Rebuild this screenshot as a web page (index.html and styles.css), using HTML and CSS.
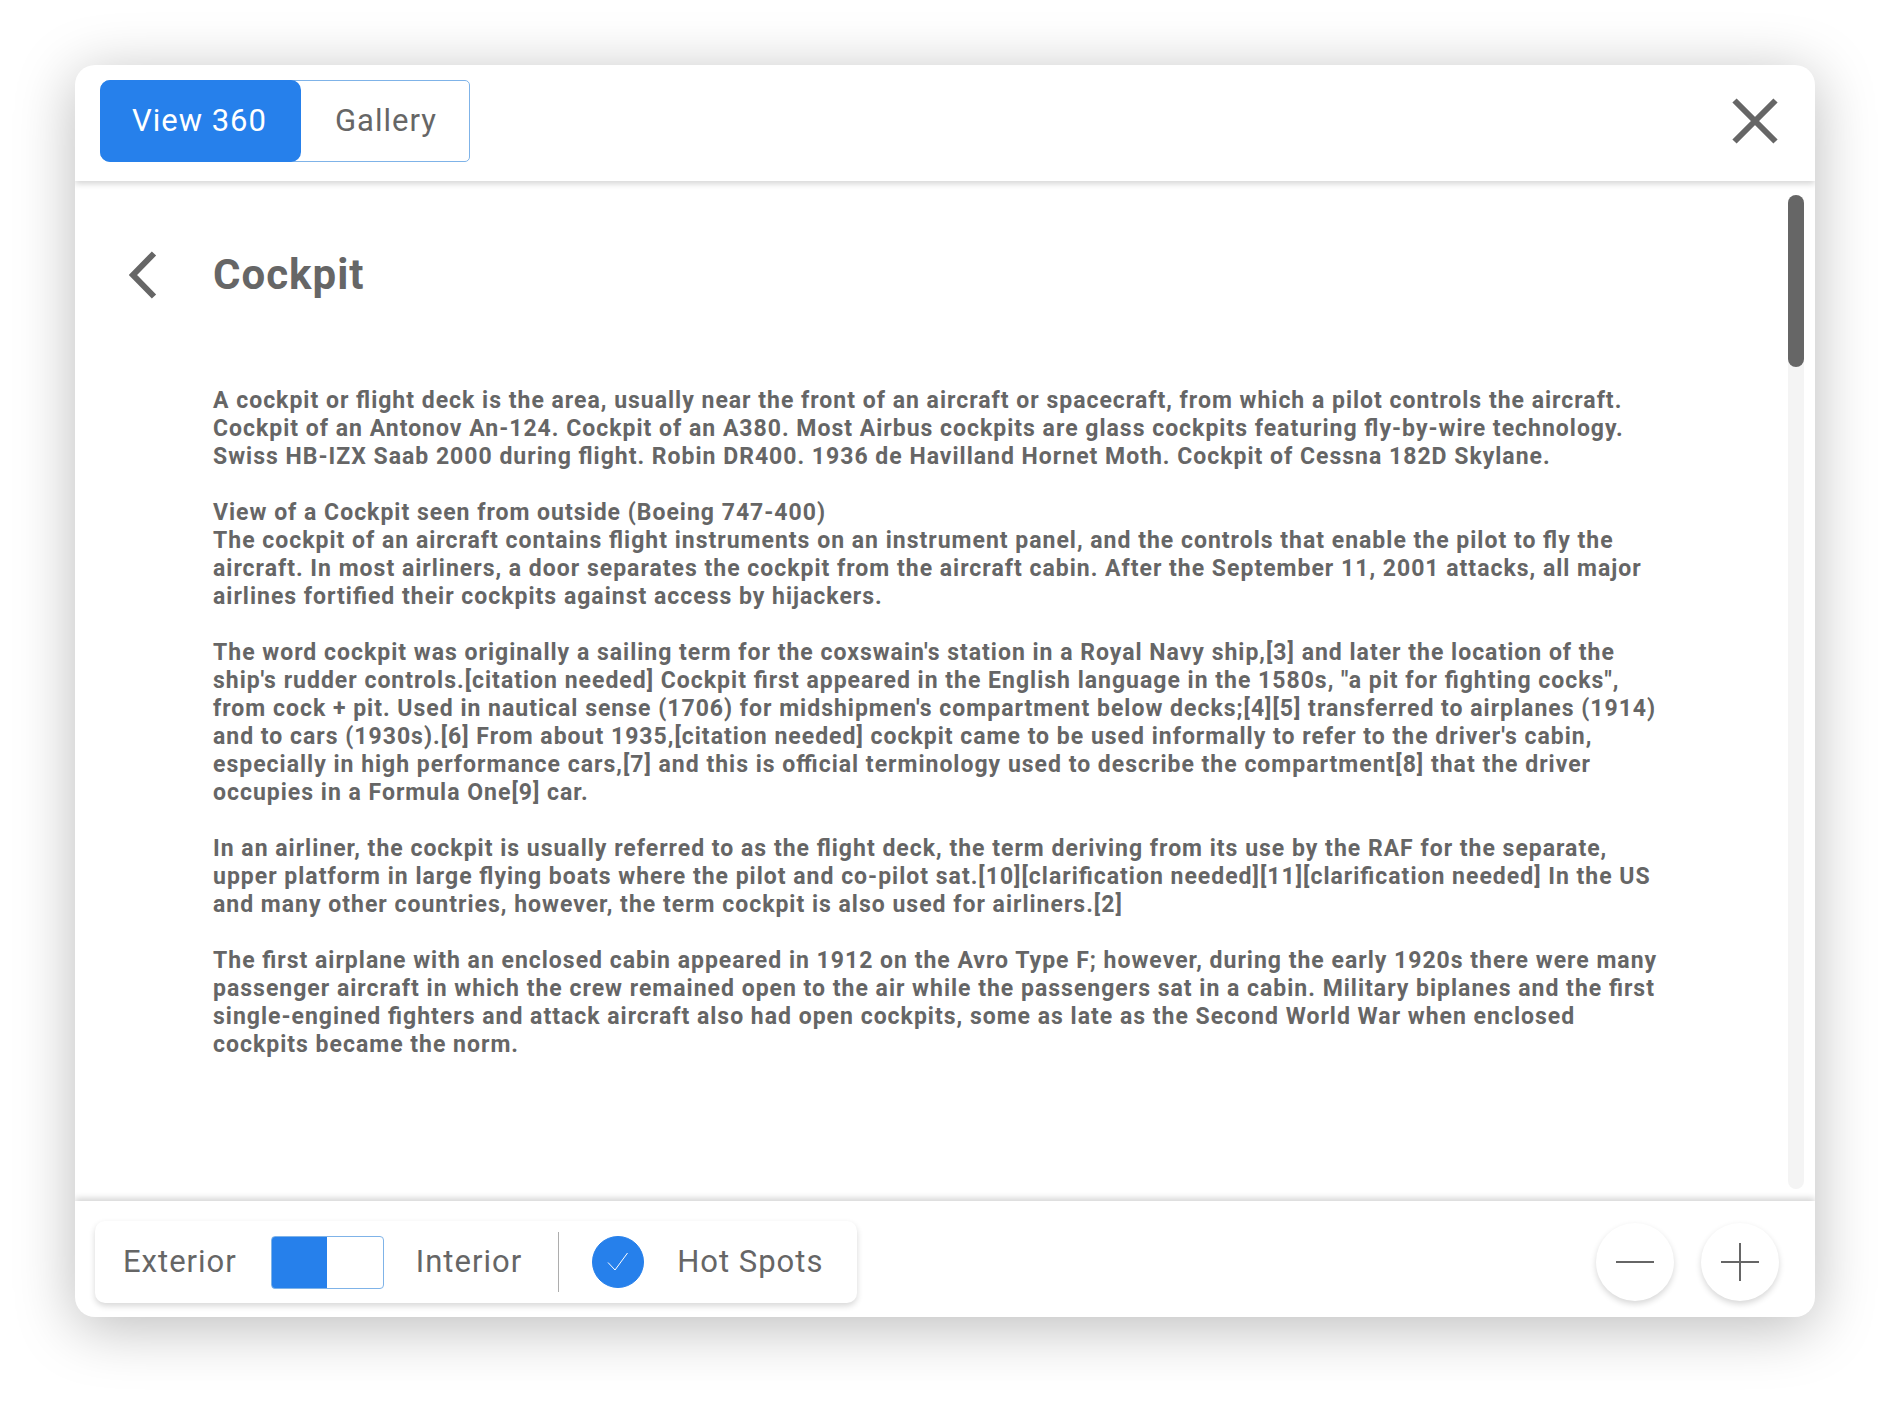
FILE: index.html
```html
<!DOCTYPE html>
<html lang="en">
<head>
  <meta charset="utf-8">
  <meta name="viewport" content="width=device-width, initial-scale=1">
  <title>Cockpit</title>
  <link rel="stylesheet" href="styles.css">
</head>
<body>
  <section class="dialog" role="dialog" aria-labelledby="title">
    <header class="dialog-header">
      <div class="tabs" role="tablist">
        <button class="tab tab-active" type="button" role="tab" aria-selected="true">View 360</button>
        <button class="tab" type="button" role="tab" aria-selected="false">Gallery</button>
      </div>
      <button class="icon-button" type="button" aria-label="Close">
        <svg class="icon" width="46" height="46" viewBox="0 0 46 46"><path d="M2.500 2.500 43.500 43.500M43.500 2.500 2.500 43.500"/></svg>
      </button>
    </header>

    <main class="dialog-main">
      <button class="icon-button back" type="button" aria-label="Back">
        <svg class="icon" width="28" height="48" viewBox="0 0 28 48"><path d="M25 2.500 4 24 25 45.500"/></svg>
      </button>
      <article class="article">
        <h1 class="title" id="title">Cockpit</h1>
        <p>A cockpit or flight deck is the area, usually near the front of an aircraft or spacecraft, from which a pilot controls the aircraft. Cockpit of an Antonov An-124. Cockpit of an A380. Most Airbus cockpits are glass cockpits featuring fly-by-wire technology. Swiss HB-IZX Saab 2000 during flight. Robin DR400. 1936 de Havilland Hornet Moth. Cockpit of Cessna 182D Skylane.</p>
        <p>View of a Cockpit seen from outside (Boeing 747-400)<br>The cockpit of an aircraft contains flight instruments on an instrument panel, and the controls that enable the pilot to fly the aircraft. In most airliners, a door separates the cockpit from the aircraft cabin. After the September 11, 2001 attacks, all major airlines fortified their cockpits against access by hijackers.</p>
        <p>The word cockpit was originally a sailing term for the coxswain's station in a Royal Navy ship,[3] and later the location of the ship's rudder controls.[citation needed] Cockpit first appeared in the English language in the 1580s, "a pit for fighting cocks", from cock + pit. Used in nautical sense (1706) for midshipmen's compartment below decks;[4][5] transferred to airplanes (1914) and to cars (1930s).[6] From about 1935,[citation needed] cockpit came to be used informally to refer to the driver's cabin, especially in high performance cars,[7] and this is official terminology used to describe the compartment[8] that the driver occupies in a Formula One[9] car.</p>
        <p>In an airliner, the cockpit is usually referred to as the flight deck, the term deriving from its use by the RAF for the separate, upper platform in large flying boats where the pilot and co-pilot sat.[10][clarification needed][11][clarification needed] In the US and many other countries, however, the term cockpit is also used for airliners.[2]</p>
        <p>The first airplane with an enclosed cabin appeared in 1912 on the Avro Type F; however, during the early 1920s there were many passenger aircraft in which the crew remained open to the air while the passengers sat in a cabin. Military biplanes and the first single-engined fighters and attack aircraft also had open cockpits, some as late as the Second World War when enclosed cockpits became the norm.</p>
      </article>
      <div class="scroll-track"><div class="scroll-thumb"></div></div>
    </main>

    <footer class="dialog-footer">
      <div class="options">
        <label for="view">Exterior</label>
        <input class="switch" type="checkbox" role="switch" id="view">
        <label for="view">Interior</label>
        <span class="divider"></span>
        <span class="check">
          <input class="check-box" type="checkbox" id="spots" checked>
          <svg class="check-mark" width="22" height="20" viewBox="0 0 22 20"><path d="M1 10.500 8 18 20.500 1"/></svg>
        </span>
        <label for="spots">Hot Spots</label>
      </div>
      <div class="zoom">
        <button class="zoom-button" type="button" aria-label="Zoom out">
          <svg class="zoom-icon" width="38" height="38" viewBox="0 0 38 38"><path d="M0 19H38"/></svg>
        </button>
        <button class="zoom-button" type="button" aria-label="Zoom in">
          <svg class="zoom-icon" width="38" height="38" viewBox="0 0 38 38"><path d="M0 19H38M19 0V38"/></svg>
        </button>
      </div>
    </footer>
  </section>
</body>
</html>
```
FILE: styles.css
```css
:root {
  --blue: #2680eb;
  --grey: #666;
  --outline: #7fb3e8;
}

* {
  box-sizing: border-box;
}

body {
  display: flex;
  min-height: 100vh;
  margin: 0;
  padding: 65px 75px 85px;
  background: #fff;
  color: var(--grey);
  font: 31px/36px Roboto, "Liberation Sans", sans-serif;
  letter-spacing: 1px;
  font-feature-settings: "liga" 1;
}

button,
input {
  margin: 0;
  padding: 0;
  border: 0;
  background: none;
  color: inherit;
  font: inherit;
  letter-spacing: inherit;
}

.dialog {
  display: flex;
  flex: 1;
  flex-direction: column;
  min-width: 0;
  overflow: hidden;
  border-radius: 20px;
  background: #fff;
  box-shadow: 0 10px 60px rgba(0, 0, 0, 0.27);
}

.dialog-header,
.dialog-footer {
  display: flex;
  align-items: center;
  justify-content: space-between;
  height: 116px;
}

.dialog-header {
  padding: 0 37px 4px 25px;
  box-shadow: 0 3px 6px rgba(0, 0, 0, 0.16);
}

.tabs {
  display: flex;
  border: 1px solid var(--outline);
  border-radius: 10px 5px 5px 10px;
}

.tab {
  height: 80px;
  padding: 0 32px 0 34px;
}

.tab-active {
  height: 82px;
  margin: -1px 0 -1px -1px;
  padding: 0 34px 0 32px;
  border-radius: 10px;
  background: var(--blue);
  color: #fff;
}

.icon-button {
  display: flex;
}

.icon {
  fill: none;
  stroke: var(--grey);
  stroke-width: 6;
}

.dialog-main {
  display: flex;
  flex: 1;
  align-items: flex-start;
  padding: 14px 11px 12px 54px;
}

.back {
  margin-top: 56px;
}

.article {
  flex: 1;
  margin: 0 128px 0 56px;
  font-size: 23px;
  font-weight: 700;
  line-height: 28px;
}

.article p {
  margin: 0 0 28px;
}

.title {
  margin: 54px 0 86px;
  font-size: 42px;
  line-height: 52px;
}

.scroll-track {
  align-self: stretch;
  width: 16px;
  border-radius: 8px;
  background: #f4f4f4;
}

.scroll-thumb {
  height: 172px;
  border-radius: 8px;
  background: var(--grey);
}

.dialog-footer {
  padding: 6px 36px 0 20px;
  box-shadow: 0 -3px 6px rgba(0, 0, 0, 0.16);
}

.options {
  display: flex;
  align-items: center;
  height: 82px;
  padding: 0 34px 0 28px;
  border-radius: 10px;
  box-shadow: 0 3px 6px rgba(0, 0, 0, 0.16);
}

.switch {
  width: 113px;
  height: 53px;
  margin: 0 32px 0 34px;
  border: 1px solid var(--outline);
  border-radius: 4px;
  background: linear-gradient(var(--blue), var(--blue)) left / 50% 100% no-repeat border-box;
  appearance: none;
}

.switch:checked {
  background-position: right;
}

.divider {
  width: 1px;
  height: 60px;
  margin: 0 33px 0 36px;
  background: #adadad;
}

.check {
  display: grid;
  margin-right: 33px;
  place-items: center;
}

.check-box,
.check-mark {
  grid-area: 1 / 1;
}

.check-box {
  width: 52px;
  height: 52px;
  border: 1px solid var(--blue);
  border-radius: 50%;
  appearance: none;
}

.check-box:checked {
  background: var(--blue);
}

.check-mark {
  z-index: 1;
  fill: none;
  stroke: #fff;
  stroke-width: 1;
  pointer-events: none;
}

.zoom {
  display: flex;
  gap: 27px;
}

.zoom-button {
  display: grid;
  width: 78px;
  height: 78px;
  border-radius: 50%;
  box-shadow: 0 3px 6px rgba(0, 0, 0, 0.16);
  place-items: center;
}

.zoom-icon {
  stroke: var(--grey);
  stroke-width: 2;
}
```
